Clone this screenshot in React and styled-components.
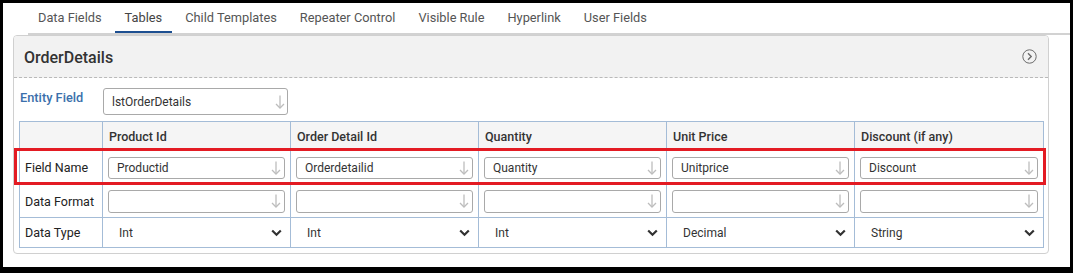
import React from "react";
import styled, { createGlobalStyle } from "styled-components";

const Global = createGlobalStyle`
  html, body { margin: 0; padding: 0; background: #fff; }
  body { font-family: Roboto, "Liberation Sans", Arial, sans-serif; color: #333; }
  * { box-sizing: border-box; }
`;

const Frame = styled.div`
  width: 1073px;
  height: 273px;
  border: 3px solid #000;
  border-bottom-width: 6px;
  background: #fff;
  overflow: hidden;
`;

const TabList = styled.div`
  display: flex;
  gap: 3px;
  margin-left: 25px;
  border-bottom: 2px solid #d2d2d2;
  height: 32px;
`;

const Tab = styled.div`
  padding: 0 10px;
  height: 30px;
  display: flex;
  align-items: center;
  font-size: 12.8px;
  color: ${(p) => (p.$active ? "#444" : "#555")};
  border-bottom: 2px solid ${(p) => (p.$active ? "#1d4f91" : "transparent")};
  padding-top: 1px;
`;

const Panel = styled.div`
  margin-left: 10px;
  width: 1036px;
  height: 219px;
  border: 1px solid #d0d0d0;
  border-radius: 4px;
  overflow: hidden;
`;

const PanelHeader = styled.div`
  height: 42px;
  background: #f2f2f2;
  border-bottom: 1px dashed #b9b9b9;
  display: flex;
  align-items: center;
  justify-content: space-between;
  padding: 0 11px 0 10px;
`;

const Title = styled.div`
  font-size: 16px;
  font-weight: 500;
  color: #333;
  padding-top: 1px;
`;

const PanelBody = styled.div`
  padding: 10px 4px 5px 5px;
`;

const EntityRow = styled.div`
  display: flex;
  align-items: flex-start;
  margin-left: 1px;
`;

const EntityLabel = styled.div`
  width: 83px;
  font-size: 12.8px;
  font-weight: 500;
  color: #3b6fab;
  padding-top: 2px;
`;

const Input = styled.div`
  position: relative;
  width: ${(p) => p.$w || "100%"};
  height: ${(p) => p.$h || 22}px;
  border: 1px solid #a9a9a9;
  border-radius: 3px;
  background: #fff;
  display: flex;
  align-items: center;
  padding-left: 8px;
  font-size: 12px;
  color: #333;
`;

const ArrowWrap = styled.span`
  position: absolute;
  right: ${(p) => p.$r || 3}px;
  top: 50%;
  transform: translateY(-50%);
  display: flex;
`;

const TableWrap = styled.div`
  position: relative;
  margin-top: 6px;
`;

const Table = styled.table`
  width: 1024px;
  border-collapse: collapse;
  table-layout: fixed;
  font-size: 12px;
`;

const Th = styled.th`
  border: 1px solid #a4bcd7;
  background: #f5f5f5;
  height: 29px;
  text-align: left;
  font-weight: 500;
  color: #333;
  padding: 0 6px;
  font-size: 12.5px;
`;

const Td = styled.td`
  border: 1px solid #a4bcd7;
  height: ${(p) => p.$h}px;
  padding: 0 5px;
  vertical-align: middle;
`;

const RowLabel = styled(Td)`
  padding-left: 5px;
  font-size: 12.5px;
  color: #222;
`;

const Select = styled.div`
  display: flex;
  align-items: center;
  justify-content: space-between;
  padding: 0 3px 0 11px;
  font-size: 12px;
  color: #333;
`;

const Highlight = styled.div`
  position: absolute;
  left: -5px;
  top: 27px;
  width: 1032px;
  height: 37px;
  border: 3px solid #e31b23;
  pointer-events: none;
`;

const DownArrow = () => (
  <svg width="10" height="15" viewBox="0 0 10 15" fill="none" stroke="#bdbdbd" strokeWidth="1.3">
    <path d="M5 1 V13.5" />
    <path d="M1 9.5 L5 13.5 L9 9.5" />
  </svg>
);

const Chevron = () => (
  <svg width="11" height="8" viewBox="0 0 11 8" fill="none" stroke="#333" strokeWidth="2.2">
    <path d="M1.2 1.5 L5.5 5.8 L9.8 1.5" />
  </svg>
);

const CircleChevron = () => (
  <svg width="15" height="15" viewBox="0 0 15 15" fill="none" stroke="#6b6b6b" strokeWidth="1">
    <circle cx="7.5" cy="7.5" r="6.7" />
    <path d="M6 4.3 L9.2 7.5 L6 10.7" strokeWidth="1.4" />
  </svg>
);

const tabs = ["Data Fields", "Tables", "Child Templates", "Repeater Control", "Visible Rule", "Hyperlink", "User Fields"];
const cols = ["Product Id", "Order Detail Id", "Quantity", "Unit Price", "Discount (if any)"];
const names = ["Productid", "Orderdetailid", "Quantity", "Unitprice", "Discount"];
const types = ["Int", "Int", "Int", "Decimal", "String"];
const widths = [83, 188, 188, 188, 188, 189];

const Field = ({ value, h }) => (
  <Input $h={h}>
    {value}
    <ArrowWrap>
      <DownArrow />
    </ArrowWrap>
  </Input>
);

export default function App() {
  return (
    <>
      <Global />
      <Frame>
        <TabList>
          {tabs.map((t) => (
            <Tab key={t} $active={t === "Tables"}>{t}</Tab>
          ))}
        </TabList>
        <Panel>
          <PanelHeader>
            <Title>OrderDetails</Title>
            <CircleChevron />
          </PanelHeader>
          <PanelBody>
            <EntityRow>
              <EntityLabel>Entity Field</EntityLabel>
              <Input $w="185px" $h={27}>
                lstOrderDetails
                <ArrowWrap $r={2}>
                  <DownArrow />
                </ArrowWrap>
              </Input>
            </EntityRow>
            <TableWrap>
              <Table>
                <colgroup>
                  {widths.map((w, i) => (
                    <col key={i} style={{ width: w }} />
                  ))}
                </colgroup>
                <thead>
                  <tr>
                    <Th />
                    {cols.map((c) => (
                      <Th key={c}>{c}</Th>
                    ))}
                  </tr>
                </thead>
                <tbody>
                  <tr>
                    <RowLabel $h={34}>Field Name</RowLabel>
                    {names.map((n) => (
                      <Td key={n} $h={34}><Field value={n} h={22} /></Td>
                    ))}
                  </tr>
                  <tr>
                    <RowLabel $h={33}>Data Format</RowLabel>
                    {names.map((n) => (
                      <Td key={n} $h={33}><Field value="" h={23} /></Td>
                    ))}
                  </tr>
                  <tr>
                    <RowLabel $h={30}>Data Type</RowLabel>
                    {types.map((t, i) => (
                      <Td key={i} $h={30}>
                        <Select>
                          {t}
                          <Chevron />
                        </Select>
                      </Td>
                    ))}
                  </tr>
                </tbody>
              </Table>
              <Highlight />
            </TableWrap>
          </PanelBody>
        </Panel>
      </Frame>
    </>
  );
}
